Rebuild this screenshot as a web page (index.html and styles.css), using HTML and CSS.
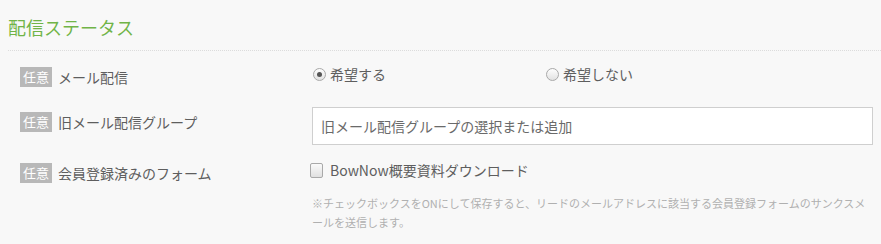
FILE: index.html
```html
<!DOCTYPE html>
<html lang="ja">
<head>
<meta charset="utf-8">
<link rel="stylesheet" href="styles.css">
</head>
<body>
<section class="section">
  <h2 class="title">配信ステータス</h2>
  <div class="rows">
    <div class="row row-mail">
      <div class="label label-radio"><span class="badge">任意</span><span class="label-text">メール配信</span></div>
      <div class="field radios">
        <label class="radio-opt"><span class="radio checked"></span>希望する</label>
        <label class="radio-opt"><span class="radio"></span>希望しない</label>
      </div>
    </div>
    <div class="row row-group">
      <div class="label label-input"><span class="badge">任意</span><span class="label-text">旧メール配信グループ</span></div>
      <div class="field">
        <input class="text-input" type="text" placeholder="旧メール配信グループの選択または追加">
      </div>
    </div>
    <div class="row row-form">
      <div class="label"><span class="badge">任意</span><span class="label-text">会員登録済みのフォーム</span></div>
      <div class="field">
        <label class="check-opt"><span class="checkbox"></span>BowNow概要資料ダウンロード</label>
        <p class="note">※チェックボックスをONにして保存すると、リードのメールアドレスに該当する会員登録フォームのサンクスメールを送信します。</p>
      </div>
    </div>
  </div>
</section>
</body>
</html>
```

FILE: styles.css
```css
html, body {
  margin: 0;
  padding: 0;
  background: #f8f8f8;
}
body {
  font-family: "Noto Sans CJK JP", "Noto Sans", sans-serif;
  color: #5e5e5e;
  width: 881px;
  height: 244px;
  overflow: hidden;
}
.section {
  padding: 0 0 0 8px;
}
.title {
  margin: 0;
  padding: 14px 0 9px;
  font-size: 18px;
  line-height: 27px;
  font-weight: normal;
  color: #70b447;
  border-bottom: 1px dotted #dcdcdc;
}
.rows {
  padding: 13px 0 0 12px;
}
.row {
  display: flex;
  align-items: flex-start;
}
.label {
  width: 292px;
  flex: none;
  display: flex;
  align-items: center;
  padding-top: 2px;
}
.label-radio {
  padding-top: 3px;
}
.label-input {
  padding-top: 5px;
}
.badge {
  display: inline-flex;
  align-items: center;
  justify-content: center;
  width: 32px;
  height: 20px;
  background: #b8b8b8;
  color: #fff;
  font-size: 13px;
  line-height: 20px;
  margin-right: 6px;
}
.label-text {
  font-size: 14px;
  line-height: 20px;
  color: #5e5e5e;
}
.field {
  width: 561px;
}
.radios {
  display: flex;
  font-size: 14px;
  line-height: 20px;
}
.radio-opt {
  width: 233px;
  display: flex;
  align-items: center;
}
.radio {
  width: 11px;
  height: 11px;
  border-radius: 50%;
  border: 1px solid #a9a9a9;
  background: linear-gradient(#fdfdfd, #e2e2e2);
  margin: 0 4px 0 1px;
  position: relative;
  box-sizing: content-box;
}
.radio.checked::after {
  content: "";
  position: absolute;
  left: 3px;
  top: 3px;
  width: 5px;
  height: 5px;
  border-radius: 50%;
  background: #555;
}
.row-group {
  margin-top: 20px;
}
.text-input {
  display: block;
  box-sizing: border-box;
  width: 561px;
  height: 38px;
  margin: 0;
  padding: 0 8px;
  border: 1px solid #cfcfcf;
  background: #fff;
  font-family: "Noto Sans CJK JP", "Noto Sans", sans-serif;
  font-size: 14px;
  color: #5e5e5e;
  outline: none;
}
.text-input::placeholder {
  color: #6a6a6a;
  opacity: 1;
}
.row-form {
  margin-top: 16px;
}
.check-opt {
  display: flex;
  align-items: center;
  font-size: 14px;
  line-height: 18px;
}
.checkbox {
  width: 11px;
  height: 13px;
  border: 1px solid #a9a9a9;
  border-radius: 2px;
  background: linear-gradient(#fafafa, #e0e0e0);
  margin: 0 7px 0 -2px;
  box-sizing: content-box;
}
.note {
  margin: 15px 0 0;
  font-size: 11px;
  line-height: 19px;
  color: #b0b0b0;
}
```
